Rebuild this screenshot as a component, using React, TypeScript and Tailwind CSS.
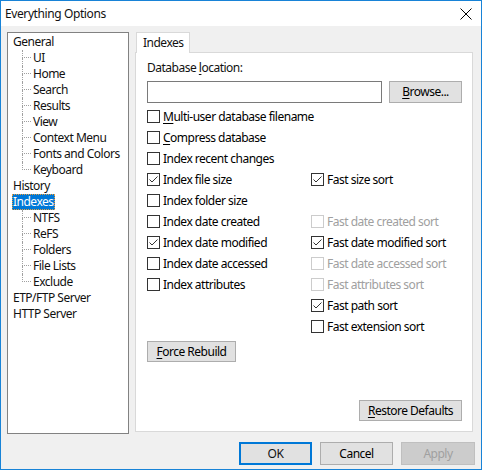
import React from "react";

const font = { fontFamily: '"Noto Sans", "Open Sans", sans-serif' };

function U({ c }: { c: string }) {
  return <span className="underline underline-offset-[2px]">{c}</span>;
}

function Check({ checked, disabled }: { checked?: boolean; disabled?: boolean }) {
  return (
    <div
      className={`w-[13px] h-[13px] shrink-0 border bg-white flex items-center justify-center ${
        disabled ? "border-[#cccccc]" : "border-[#333333]"
      }`}
    >
      {checked && (
        <svg width="11" height="11" viewBox="0 0 11 11">
          <path d="M1.5 5.5 L4 8 L9.5 2.5" fill="none" stroke="#333333" strokeWidth="1" />
        </svg>
      )}
    </div>
  );
}

function CB({ label, checked, disabled }: { label: React.ReactNode; checked?: boolean; disabled?: boolean }) {
  return (
    <div className="h-[21px] flex items-center gap-[3px] whitespace-nowrap">
      <Check checked={checked} disabled={disabled} />
      <span className={disabled ? "text-[#a0a0a0]" : "text-black"}>{label}</span>
    </div>
  );
}

function Btn({ children, w, h = "h-[21px]" }: { children: React.ReactNode; w: string; h?: string }) {
  return (
    <div className={`${w} ${h} border border-[#adadad] bg-[#e1e1e1] flex items-center justify-center text-black whitespace-nowrap`}>
      {children}
    </div>
  );
}

function Child({ label, last }: { label: string; last?: boolean }) {
  return (
    <div className="flex h-[16px] items-stretch whitespace-nowrap">
      <div className="w-[9px] ml-[9px] flex flex-col">
        <div className="h-[8px] border-l border-b border-dotted border-[#a0a0a0]" />
        <div className={`h-[8px] ${last ? "" : "border-l border-dotted border-[#a0a0a0]"}`} />
      </div>
      <span className="ml-[2px] leading-[16px]">{label}</span>
    </div>
  );
}

function Top({ label, selected }: { label: string; selected?: boolean }) {
  return (
    <div className="h-[16px] flex whitespace-nowrap">
      {selected ? (
        <span className="-ml-[1px] leading-[14px] border border-dotted border-[#e8a040] bg-[#0078d7] text-white">
          {label}
        </span>
      ) : (
        <span className="leading-[16px]">{label}</span>
      )}
    </div>
  );
}

export default function App() {
  return (
    <div
      className="w-[482px] h-[470px] border border-[#1883d7] bg-[#f0f0f0] flex flex-col text-[12px] tracking-[-0.5px] text-[#111111]"
      style={font}
    >
      <div className="h-[25px] bg-white flex items-center justify-between pl-[4px] pr-[9px]">
        <span className="text-[12px] tracking-[-0.4px]">Everything Options</span>
        <svg width="12" height="12" viewBox="0 0 12 12">
          <path d="M0.5 0.5 L11.5 11.5 M11.5 0.5 L0.5 11.5" stroke="#000" strokeWidth="1" />
        </svg>
      </div>
      <div className="flex pl-[6px] pt-[6px] gap-[6px]">
        <div className="w-[122px] h-[402px] border border-[#828282] bg-white pl-[5px] pt-[1px]">
          <Top label="General" />
          <Child label="UI" />
          <Child label="Home" />
          <Child label="Search" />
          <Child label="Results" />
          <Child label="View" />
          <Child label="Context Menu" />
          <Child label="Fonts and Colors" />
          <Child label="Keyboard" last />
          <Top label="History" />
          <Top label="Indexes" selected />
          <Child label="NTFS" />
          <Child label="ReFS" />
          <Child label="Folders" />
          <Child label="File Lists" />
          <Child label="Exclude" last />
          <Top label="ETP/FTP Server" />
          <Top label="HTTP Server" />
        </div>
        <div className="flex flex-col w-[338px]">
          <div className="flex">
            <div className="ml-[1px] w-[54px] h-[21px] border border-b-0 border-[#d9d9d9] bg-white pl-[6px] leading-[19px] -mb-[1px] relative z-10">
              Indexes
            </div>
          </div>
          <div className="h-[380px] border border-[#d9d9d9] bg-white pl-[11px] pr-[10px] pt-[7px] pb-[10px] flex flex-col">
            <div className="h-[16px] leading-[16px]">
              Database <U c="l" />ocation:
            </div>
            <div className="flex mt-[5px] gap-[7px]">
              <div className="w-[235px] h-[22px] border border-[#7a7a7a] bg-white" />
              <Btn w="w-[73px]" h="h-[22px]">
                <span>
                  <U c="B" />rowse...
                </span>
              </Btn>
            </div>
            <div className="grid grid-cols-[164px_1fr] mt-[3px]">
              <div className="flex flex-col">
                <CB label={<><U c="M" />ulti-user database filename</>} />
                <CB label={<><U c="C" />ompress database</>} />
                <CB label="Index recent changes" />
                <CB label="Index file size" checked />
                <CB label="Index folder size" />
                <CB label="Index date created" />
                <CB label="Index date modified" checked />
                <CB label="Index date accessed" />
                <CB label="Index attributes" />
              </div>
              <div className="flex flex-col">
                <div className="h-[21px]" />
                <div className="h-[21px]" />
                <div className="h-[21px]" />
                <CB label="Fast size sort" checked />
                <div className="h-[21px]" />
                <CB label="Fast date created sort" disabled />
                <CB label="Fast date modified sort" checked />
                <CB label="Fast date accessed sort" disabled />
                <CB label="Fast attributes sort" disabled />
                <CB label="Fast path sort" checked />
                <CB label="Fast extension sort" />
              </div>
            </div>
            <div className="mt-[4px]">
              <Btn w="w-[89px]">
                <span>
                  <U c="F" />orce Rebuild
                </span>
              </Btn>
            </div>
            <div className="flex-1" />
            <div className="flex justify-end">
              <Btn w="w-[103px]">
                <span>
                  <U c="R" />estore Defaults
                </span>
              </Btn>
            </div>
          </div>
        </div>
      </div>
      <div className="flex justify-end gap-[8px] pr-[6px] mt-[8px]">
        <div className="w-[73px] h-[23px] border-2 border-[#0078d7] bg-[#e1e1e1] flex items-center justify-center">
          OK
        </div>
        <Btn w="w-[73px]" h="h-[23px]">Cancel</Btn>
        <div className="w-[74px] h-[23px] border border-[#bfbfbf] bg-[#cccccc] flex items-center justify-center text-[#a0a0a0]">
          Apply
        </div>
      </div>
    </div>
  );
}
